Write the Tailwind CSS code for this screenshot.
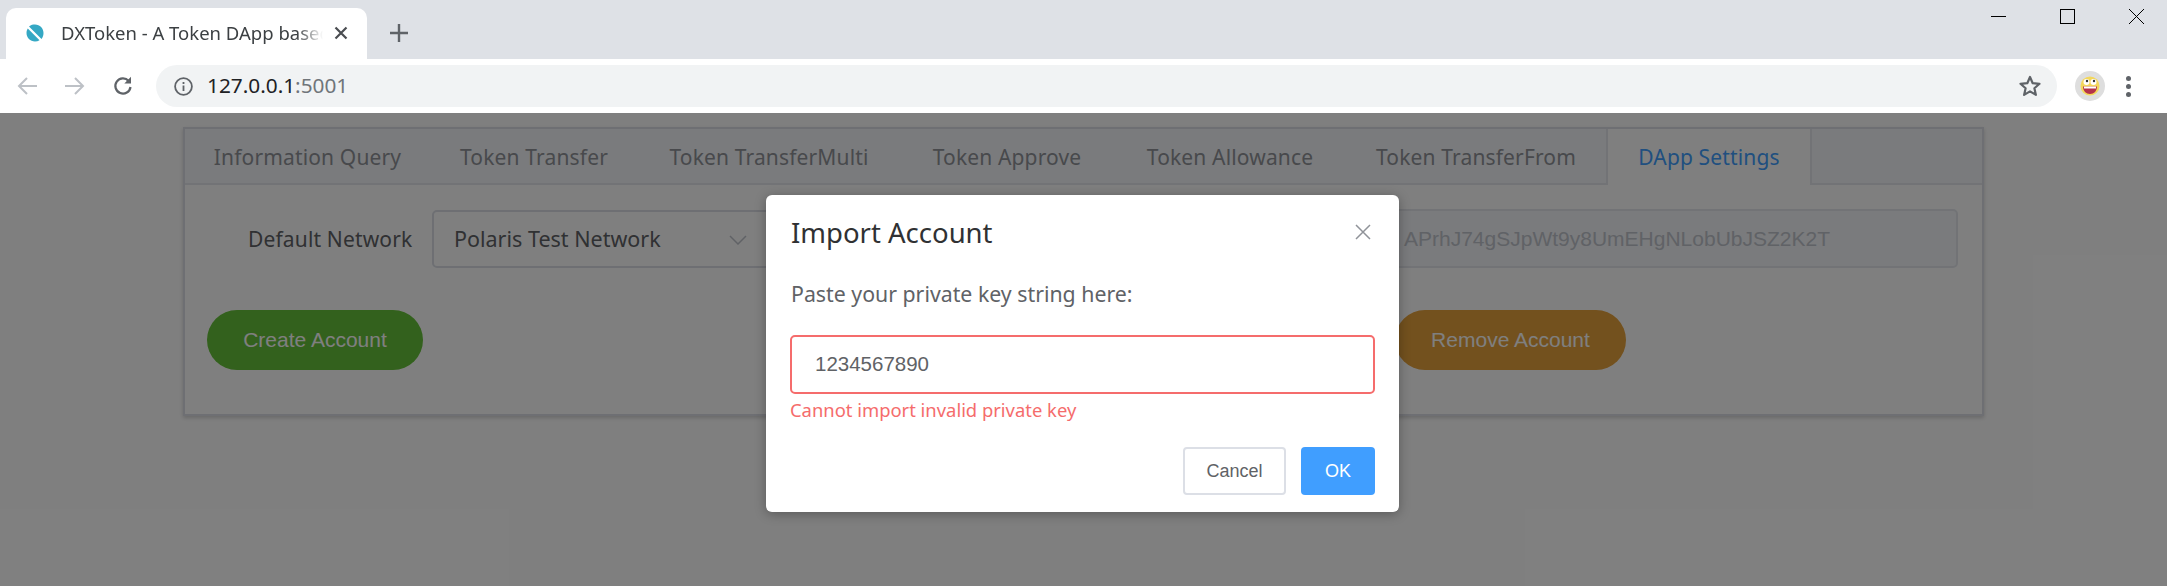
<!DOCTYPE html>
<html lang="en"><head><meta charset="utf-8"><title>DXToken</title>
<script src="https://cdn.jsdelivr.net/npm/@tailwindcss/browser@4"></script></head>
<body class="h-[586px] w-[2167px] overflow-hidden bg-white font-['Noto_Sans',sans-serif]">
<!-- tab strip -->
<div class="flex h-[59px] bg-[#dee1e6]">
  <div class="mt-2 ml-1.5 flex h-[51px] w-[361px] items-center rounded-t-[10px] bg-white pb-[2px] pl-5">
    <svg class="shrink-0" width="18" height="18" viewBox="0 0 18 18"><path d="M3 2.500C5 .800 7 .500 9 .500c5 0 8.500 3.800 8.500 8.500 0 2.200-.7 4.300-2 6zM1.800 4.500L13.500 16.300C12.200 17.100 10.700 17.500 9 17.500c-4.800 0-8.500-3.800-8.500-8.500 0-1.700.5-3.200 1.300-4.500z" fill="#35a8c4"/></svg>
    <span class="ml-[17px] w-[262px] overflow-hidden whitespace-nowrap text-[18.500px] text-[#3c4043] [mask-image:linear-gradient(90deg,#000_90%,transparent)]">DXToken - A Token DApp based on Ontology</span>
    <svg class="ml-[11px]" width="14" height="14" viewBox="0 0 14 14"><path d="M1.500 1.500l11 11M12.500 1.500l-11 11" stroke="#4a4d51" stroke-width="2.200"/></svg>
  </div>
  <svg class="mt-[24px] ml-[23px]" width="18" height="18" viewBox="0 0 18 18"><path d="M9 0v18M0 9h18" stroke="#5f6368" stroke-width="2.400"/></svg>
  <div class="ml-auto mt-[9px] flex gap-[54px] pr-[23px]">
    <svg width="15" height="15" viewBox="0 0 15 15"><path d="M0 7.500h15" stroke="#000"/></svg>
    <svg width="15" height="15" viewBox="0 0 15 15"><rect x=".5" y=".5" width="14" height="14" fill="none" stroke="#000"/></svg>
    <svg width="15" height="15" viewBox="0 0 15 15"><path d="M0 0l15 15M15 0L0 15" stroke="#000"/></svg>
  </div>
</div>
<!-- toolbar -->
<div class="flex h-[54px] items-center bg-white">
  <div class="ml-[17px] flex w-[116px] items-center justify-between">
    <svg width="20" height="20" viewBox="0 0 20 20" fill="none" stroke="#bdc1c6" stroke-width="2"><path d="M20 10H2M10 2l-8 8 8 8"/></svg>
    <svg width="20" height="20" viewBox="0 0 20 20" fill="none" stroke="#bdc1c6" stroke-width="2"><path d="M0 10h18M10 2l8 8-8 8"/></svg>
    <svg width="20" height="20" viewBox="0 0 20 20" fill="none" stroke="#5f6368" stroke-width="2.200"><path d="M17.500 11a7.600 7.600 0 1 1-1.800-6"/><path d="M18 0.800v6.700h-6.700" fill="#5f6368" stroke="none"/></svg>
  </div>
  <div class="ml-[23px] flex h-[42px] w-[1901px] items-center rounded-full bg-[#f1f3f4] pl-[18px] pr-[17px]">
    <svg width="19" height="19" viewBox="0 0 19 19" fill="none" stroke="#5f6368" stroke-width="1.800"><circle cx="9.500" cy="9.500" r="8.400"/><path d="M9.500 8.500v5.500M9.500 5v2"/></svg>
    <span class="ml-[14px] text-[20.800px] text-[#202124]">127.0.0.1<span class="text-[#70757a]">:5001</span></span>
    <svg class="ml-auto mr-[-2px]" width="24" height="24" viewBox="0 0 24 24" fill="none" stroke="#5f6368" stroke-width="2.200" stroke-linejoin="round"><path d="M12 3l2.700 6.200 6.800.6-5.100 4.500 1.500 6.600-5.900-3.500-5.900 3.500 1.500-6.600-5.100-4.500 6.800-.6z"/></svg>
  </div>
  <div class="ml-[18px] flex size-[30px] items-center justify-center rounded-full bg-[#dedede]">
    <svg width="20" height="20" viewBox="0 0 20 20"><circle cx="10" cy="10" r="9.500" fill="#f3d75c"/><circle cx="6.500" cy="6" r="3" fill="#fff"/><circle cx="13.500" cy="6" r="3" fill="#fff"/><circle cx="7" cy="5" r="1.200" fill="#333"/><circle cx="14" cy="5" r="1.200" fill="#333"/><path d="M3 10.500h14c0 4.500-3 7.500-7 7.500s-7-3-7-7.500z" fill="#b4324a"/><path d="M4 10.500h12v2H4z" fill="#fff"/></svg>
  </div>
  <div class="ml-[21px] flex flex-col gap-[3px]"><i class="size-[5px] rounded-full bg-[#5f6368]"></i><i class="size-[5px] rounded-full bg-[#5f6368]"></i><i class="size-[5px] rounded-full bg-[#5f6368]"></i></div>
</div>
<!-- page -->
<main class="relative h-[473px] bg-white pt-[14px] pl-[183px]">
  <section class="h-[289px] w-[1801px] border-2 border-[#dcdfe6] bg-white shadow-[0_2px_4px_rgba(0,0,0,.18)]">
    <div class="flex h-[56px] items-start border-b-2 border-[#e4e7ed] bg-[#f5f7fa] text-[21px] tracking-[.15px] whitespace-nowrap text-[#909399]">
      <span class="flex h-[56px] w-[245px] items-center justify-center pt-[2px] pl-[30px] pr-[30px]">Information Query</span>
      <span class="flex h-[56px] w-[208px] items-center justify-center pt-[2px]">Token Transfer</span>
      <span class="flex h-[56px] w-[262px] items-center justify-center pt-[2px]">Token TransferMulti</span>
      <span class="flex h-[56px] w-[214px] items-center justify-center pt-[2px]">Token Approve</span>
      <span class="flex h-[56px] w-[232px] items-center justify-center pt-[2px]">Token Allowance</span>
      <span class="flex h-[56px] w-[260px] items-center justify-center pt-[2px]">Token TransferFrom</span>
      <span class="flex h-[56px] w-[206px] items-center justify-center border-x-2 border-[#e4e7ed] bg-white pt-[2px] text-[#409eff]">DApp Settings</span>
    </div>
    <div class="flex h-[231px] flex-col pt-[24px] pr-[24px] pl-[22px]">
      <div class="flex h-[59px] items-center">
        <label class="ml-[41px] w-[165px] whitespace-nowrap pt-[2px] text-[21px] tracking-[.15px] text-[#606266]">Default Network</label>
        <div class="ml-[19px] flex h-[58px] w-[400px] items-center justify-between rounded-[5px] border-2 border-[#dcdfe6] bg-white pt-[2px] pl-[20px] pr-[24px] text-[21.500px] text-[#606266]">Polaris Test Network
          <svg class="mr-[59px]" width="18" height="10" viewBox="0 0 18 10" fill="none" stroke="#c0c4cc" stroke-width="1.500"><path d="M1 1l8 8 8-8"/></svg>
        </div>
        <div class="ml-auto flex h-[59px] w-[760px] items-center rounded-[5px] border-2 border-[#e4e7ed] bg-[#f5f7fa] pl-[204px] font-['Liberation_Sans',sans-serif] text-[21px] text-[#c0c4cc]">APrhJ74gSJpWt9y8UmEHgNLobUbJSZ2K2T</div>
      </div>
      <div class="mt-[42px] flex justify-between pr-[332px]">
        <button class="h-[60px] w-[216px] rounded-full bg-[#67c23a] font-['Liberation_Sans',sans-serif] text-[21px] text-white">Create Account</button>
        <button class="h-[60px] w-[231px] rounded-full bg-[#e6a23c] font-['Liberation_Sans',sans-serif] text-[21px] text-white">Remove Account</button>
      </div>
    </div>
  </section>
  <div class="absolute inset-0 bg-black/50"></div>
  <div role="dialog" class="absolute top-[82px] left-[766px] h-[317px] w-[633px] rounded-[6px] bg-white px-[24px] shadow-[0_2px_12px_rgba(0,0,0,.3)]">
    <div class="flex h-[76px] items-center justify-between pr-[4px] pl-[1px] pb-[1px]">
      <h2 class="text-[27.500px] text-[#303133]">Import Account</h2>
      <svg width="16" height="16" viewBox="0 0 16 16" stroke="#909399" stroke-width="1.500" class="mt-[-2px]"><path d="M1 1l14 14M15 1L1 15"/></svg>
    </div>
    <p class="mt-[5px] h-[36px] pl-[1px] text-[21.300px] leading-[36px] text-[#606266]">Paste your private key string here:</p>
    <div class="mt-[23px] flex h-[59px] items-center rounded-[5px] border-2 border-[#f56c6c] pl-[23px] font-['Liberation_Sans',sans-serif] text-[20.500px] text-[#606266]">1234567890</div>
    <p class="mt-[2px] text-[18.400px] leading-[28px] text-[#f56c6c]">Cannot import invalid private key</p>
    <div class="mt-[23px] flex justify-end gap-[15px] font-['Liberation_Sans',sans-serif] text-[18px]">
      <button class="h-[48px] w-[103px] rounded-[4px] border-2 border-[#dcdfe6] bg-white text-[#606266]">Cancel</button>
      <button class="h-[48px] w-[74px] rounded-[4px] bg-[#409eff] text-white">OK</button>
    </div>
  </div>
</main>
</body></html>
